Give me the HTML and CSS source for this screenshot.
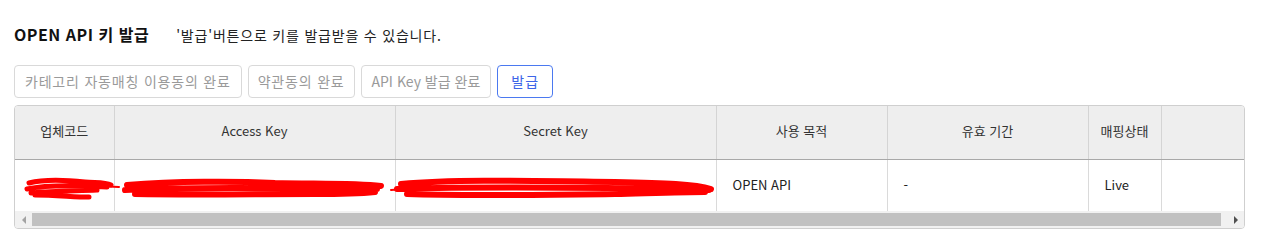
FILE: index.html
```html
<!DOCTYPE html>
<html lang="ko">
<head>
<meta charset="utf-8">
<link rel="stylesheet" href="styles.css">
</head>
<body>
<div class="page">
  <div class="title-row">
    <h2 class="title">OPEN API 키 발급</h2>
    <span class="desc">'발급'버튼으로 키를 발급받을 수 있습니다.</span>
  </div>
  <div class="btn-row">
    <button class="btn btn-done btn-ko btn-wide">카테고리 자동매칭 이용동의 완료</button>
    <button class="btn btn-done btn-ko">약관동의 완료</button>
    <button class="btn btn-done btn-api">API Key 발급 완료</button>
    <button class="btn btn-primary">발급</button>
  </div>
  <div class="grid">
    <table class="tbl">
      <colgroup>
        <col style="width:99px"><col style="width:281px"><col style="width:321px"><col style="width:171px"><col style="width:201px"><col style="width:73px"><col>
      </colgroup>
      <thead>
        <tr>
          <th>업체코드</th><th>Access Key</th><th>Secret Key</th><th>사용 목적</th><th>유효 기간</th><th>매핑상태</th><th></th>
        </tr>
      </thead>
      <tbody>
        <tr>
          <td></td><td></td><td></td><td class="left">OPEN API</td><td class="left">-</td><td class="left">Live</td><td></td>
        </tr>
      </tbody>
    </table>
    <svg class="scribble" width="700" height="52" viewBox="0 0 700 52">
      <g fill="none" stroke="#ff0000" stroke-linecap="round" stroke-linejoin="round">
        <path d="M14 24 C30 20 50 21 70 23 C80 24 90 23 96 26 M12 30 C30 26 60 26 92 28 M16 34 C40 32 60 32 82 31 M20 36 C40 36 60 38 74 38" stroke-width="5"/>
        <path d="M60 26 L104 28" stroke-width="2"/>
        <path d="M112 26 C160 22 220 22 260 24 C300 25 340 24 366 27 M110 31 C180 28 260 29 362 30 M120 35 C180 36 240 35 300 35 C330 35 350 34 360 33" stroke-width="6"/>
        <path d="M376 31 L390 30" stroke-width="2"/>
        <path d="M386 25 C440 20 520 22 600 23 C650 24 680 25 696 30 M382 30 C460 28 560 28 694 31 M392 35 C450 37 520 36 600 35 C640 34 670 33 690 33" stroke-width="6"/>
      </g>
    </svg>
    <div class="hscroll">
      <span class="arrow arrow-left"></span>
      <span class="track"><span class="thumb"></span></span>
      <span class="arrow arrow-right"></span>
    </div>
  </div>
</div>
</body>
</html>
```
FILE: styles.css
```css
* { box-sizing: border-box; }
html, body { margin: 0; padding: 0; background: #fff; }
body {
  font-family: "Noto Sans CJK KR", "Noto Sans", sans-serif;
  color: #222;
  width: 1264px;
  height: 243px;
  overflow: hidden;
}
.page { padding: 21px 19px 0 14px; }
.title-row {
  display: flex;
  align-items: baseline;
  gap: 27px;
  height: 26px;
}
.title {
  margin: 0;
  font-size: 16px;
  font-weight: 700;
  color: #111;
  line-height: 26px;
  letter-spacing: 0.5px;
}
.desc {
  font-size: 14px;
  color: #222;
  line-height: 26px;
  letter-spacing: 0.8px;
}
.btn-row {
  display: flex;
  gap: 6px;
  margin-top: 18px;
}
.btn {
  height: 33px;
  padding: 0 10px;
  border-radius: 4px;
  background: #fff;
  font-family: inherit;
  font-size: 14px;
  line-height: 31px;
  cursor: default;
}
.btn-ko { letter-spacing: 0.8px; padding: 0 9px; }
.btn-wide { padding: 0 10px; }
.btn-api { padding: 0 10px; }
.btn-done {
  border: 1px solid #d9d9d9;
  color: #9a9a9a;
}
.btn-primary {
  border: 1px solid #4b79f0;
  color: #3d64e8;
  padding: 0 13px;
  letter-spacing: 1px;
}
.grid {
  position: relative;
  margin-top: 7px;
  border: 1px solid #cfcfcf;
  border-radius: 4px;
  overflow: hidden;
  width: 1231px;
}
.tbl {
  width: 100%;
  border-collapse: collapse;
  table-layout: fixed;
}
.tbl th {
  height: 53px;
  background: #eeeeee;
  font-weight: 400;
  font-size: 13px;
  color: #333;
  text-align: center;
  border-right: 1px solid #d4d4d4;
  border-bottom: 1px solid #a8a8a8;
  padding: 0;
  padding-bottom: 3px;
}
.tbl td {
  height: 52px;
  font-size: 13px;
  color: #222;
  border-right: 1px solid #dadada;
  padding: 0 16px;
  padding-bottom: 2px;
}
.tbl th:last-child, .tbl td:last-child { border-right: none; }
.tbl td.left { text-align: left; }
.scribble {
  position: absolute;
  left: 0;
  top: 53px;
}
.hscroll {
  display: flex;
  align-items: center;
  height: 17px;
  background: #f1f1f1;
}
.arrow {
  width: 17px;
  height: 17px;
  display: flex;
  align-items: center;
  justify-content: center;
}
.arrow::before {
  content: "";
  width: 0; height: 0;
  border-top: 4px solid transparent;
  border-bottom: 4px solid transparent;
}
.arrow-left::before { border-right: 4px solid #a3a3a3; }
.arrow-right::before { border-left: 4px solid #505050; }
.track {
  flex: 1;
  height: 13px;
  padding-right: 6px;
  display: flex;
}
.thumb {
  flex: 1;
  background: #c1c1c1;
}
```
